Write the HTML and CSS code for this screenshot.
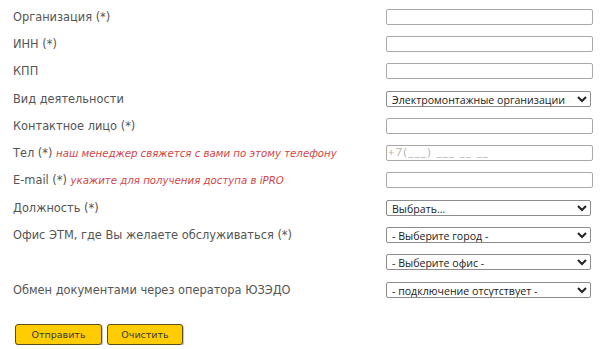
FILE: index.html
```html
<!DOCTYPE html>
<html lang="ru">

<head>
  <meta charset="UTF-8" />
  <meta name="viewport" content="width=device-width, initial-scale=1.0" />
  <title>Заявка</title>
  <link rel="stylesheet" href="styles.css">
</head>

<body>
  <form class="reg">
    <div class="row">
      <label class="lbl">Организация (*)</label>
      <input class="field" type="text" />
    </div>
    <div class="row">
      <label class="lbl">ИНН (*)</label>
      <input class="field" type="text" />
    </div>
    <div class="row">
      <label class="lbl">КПП</label>
      <input class="field" type="text" />
    </div>
    <div class="row">
      <label class="lbl">Вид деятельности</label>
      <select class="pick">
        <option>Электромонтажные организации</option>
      </select>
    </div>
    <div class="row">
      <label class="lbl">Контактное лицо (*)</label>
      <input class="field" type="text" />
    </div>
    <div class="row">
      <label class="lbl">Тел (*) <em class="hint">наш менеджер свяжется с вами по этому телефону</em></label>
      <input class="field" type="text" placeholder="+7(___) ___ __ __" />
    </div>
    <div class="row">
      <label class="lbl">E-mail (*) <em class="hint">укажите для получения доступа в iPRO</em></label>
      <input class="field" type="text" />
    </div>
    <div class="row">
      <label class="lbl">Должность (*)</label>
      <select class="pick">
        <option>Выбрать...</option>
      </select>
    </div>
    <div class="row">
      <label class="lbl">Офис ЭТМ, где Вы желаете обслуживаться (*)</label>
      <select class="pick">
        <option>- Выберите город -</option>
      </select>
    </div>
    <div class="row">
      <label class="lbl"></label>
      <select class="pick">
        <option>- Выберите офис -</option>
      </select>
    </div>
    <div class="row">
      <label class="lbl">Обмен документами через оператора ЮЗЭДО</label>
      <select class="pick">
        <option>- подключение отсутствует -</option>
      </select>
    </div>

    <div class="buttons">
      <button type="button" class="btn send">Отправить</button>
      <button type="button" class="btn clear">Очистить</button>
    </div>
  </form>
</body>

</html>
```

FILE: styles.css
```css
* {
  margin: 0;
  padding: 0;
  box-sizing: border-box;
}

body {
  background: #fff;
  font-family: "DejaVu Sans", Verdana, sans-serif;
  color: #555;
}

.reg {
  padding: 3px 0 0 13px;
}

.row {
  display: grid;
  grid-template-columns: 373px 207px;
  align-items: center;
  height: 27.3px;
}

.lbl {
  font-size: 11.4px;
  white-space: nowrap;
}

.hint {
  color: #d24545;
  font-size: 10.2px;
}

.field {
  width: 207px;
  height: 16px;
  border: 1px solid #a9a9a9;
  border-radius: 2px;
  outline: none;
  padding: 0 1px 3px;
  font: 11px/12px "Open Sans", sans-serif;
  color: #333;
}

.field::placeholder {
  color: #b0b0b0;
  letter-spacing: 1.5px;
}

.pick {
  width: 205px;
  height: 16px;
  border: 1px solid #8c8c8c;
  border-radius: 2px;
  background: #fff;
  padding: 0 1px;
  font: 10.6px/14px "Open Sans", sans-serif;
  color: #222;
}

.buttons {
  display: flex;
  gap: 5px;
  margin-top: 21px;
  padding-left: 2px;
}

.btn {
  height: 21px;
  background: #ffcc00;
  border: 1px solid #5e4d16;
  border-radius: 3px;
  box-shadow: 1px 1px 1px rgba(0, 0, 0, 0.25);
  font: 9.5px "DejaVu Sans", Verdana, sans-serif;
  color: #3a3a3a;
  cursor: pointer;
}

.send {
  width: 87px;
}

.clear {
  width: 76px;
}
```
